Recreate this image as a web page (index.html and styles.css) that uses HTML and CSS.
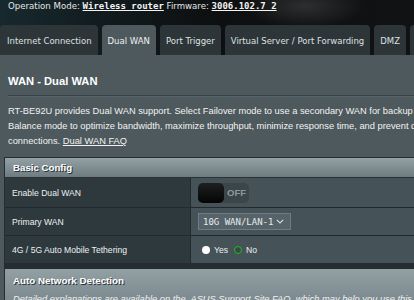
FILE: index.html
```html
<!DOCTYPE html>
<html>
<head>
<meta charset="utf-8">
<link rel="stylesheet" href="styles.css">
</head>
<body>
<div class="page">
  <header class="top">
    <div class="opbar">
      <span>Operation Mode:</span>
      <a class="mono">Wireless router</a>
      <span>Firmware:</span>
      <a class="mono">3006.102.7_2</a>
    </div>
    <nav class="tabs">
      <div class="tab">Internet Connection</div>
      <div class="tab active">Dual WAN</div>
      <div class="tab">Port Trigger</div>
      <div class="tab">Virtual Server / Port Forwarding</div>
      <div class="tab">DMZ</div>
      <div class="tab">DDNS</div>
    </nav>
  </header>
  <main class="content">
    <h1 class="title">WAN - Dual WAN</h1>
    <div class="divider"></div>
    <p class="desc">
      <span class="line">RT-BE92U provides Dual WAN support. Select Failover mode to use a secondary WAN for backup network access. Select Load</span>
      <span class="line">Balance mode to optimize bandwidth, maximize throughput, minimize response time, and prevent data overload for both WAN</span>
      <span class="line">connections. <a class="faq">Dual WAN FAQ</a></span>
    </p>

    <section class="formtable">
      <div class="thead">Basic Config</div>
      <div class="row r1">
        <div class="th">Enable Dual WAN</div>
        <div class="td">
          <div class="toggle"><span class="knob"></span><span class="off">OFF</span></div>
        </div>
      </div>
      <div class="row">
        <div class="th">Primary WAN</div>
        <div class="td">
          <div class="select"><span>10G WAN/LAN-1</span>
            <svg class="chev" width="8" height="5" viewBox="0 0 8 5"><polyline points="0.8,0.8 4,4 7.2,0.8" fill="none" stroke="#d8dcde" stroke-width="1.1"/></svg>
          </div>
        </div>
      </div>
      <div class="row">
        <div class="th">4G / 5G Auto Mobile Tethering</div>
        <div class="td radios">
          <label class="radio"><span class="dot yes"></span>Yes</label>
          <label class="radio"><span class="dot no"></span>No</label>
        </div>
      </div>
    </section>

    <section class="formtable second">
      <div class="thead big">
        <div>Auto Network Detection</div>
        <div class="note">Detailed explanations are available on the&nbsp; ASUS Support Site FAQ, which may help you use this function properly.</div>
      </div>
    </section>
  </main>
</div>
</body>
</html>
```
FILE: styles.css
```css
html, body {
  margin: 0;
  padding: 0;
}
body {
  width: 414px;
  height: 300px;
  overflow: hidden;
  background: #4d595d;
  font-family: "Liberation Sans", Arial, sans-serif;
  color: #fff;
}
.page {
  width: 760px;
}
.top {
  background:
    radial-gradient(ellipse 60px 22px at 305px 6px, rgba(70,72,72,0.55), rgba(70,72,72,0) 100%),
    linear-gradient(90deg, #17292e 0px, #111a1d 110px, #0d0f10 220px, #101213 414px);
}
.opbar {
  height: 25px;
  padding-left: 8px;
  font: 8.6px/12px "DejaVu Sans", sans-serif;
  color: #e4e6e6;
  white-space: nowrap;
}
.opbar .mono {
  font: bold 9px/12px "DejaVu Sans Mono", monospace;
  color: #f4f4f4;
  text-decoration: underline;
}
.tabs {
  display: flex;
  gap: 4px;
  height: 30px;
}
.tab {
  height: 27px;
  padding: 3px 6px 0;
  line-height: 27px;
  font: 8.5px/27px "DejaVu Sans", sans-serif;
  color: #dde1e2;
  background: #2d3538;
  border-radius: 4px 4px 0 0;
  white-space: nowrap;
}
.tab:first-child {
  padding-left: 7px;
}
.tab.active {
  background: #4d595d;
  color: #eef0f0;
}
.content {
  padding-top: 19px;
}
.title {
  margin: 0 0 0 8px;
  font-size: 11.2px;
  line-height: 14px;
  font-weight: bold;
  color: #fff;
}
.divider {
  margin: 7px 0 0 8px;
  height: 1px;
  background: #39434a;
  border-bottom: 1px solid #56646a;
}
.desc {
  margin: 7px 0 0 8px;
  font-size: 9.3px;
  line-height: 15px;
  color: #f2f2f2;
}
.desc .line {
  display: block;
  white-space: nowrap;
}
.faq {
  text-decoration: underline;
}
.formtable {
  margin: 8px 0 0 4px;
  border: 1px solid #252d31;
  border-bottom-width: 6px;
  width: 740px;
}
.thead {
  height: 19px;
  padding-left: 8px;
  font-size: 9.7px;
  line-height: 19px;
  font-weight: bold;
  color: #fff;
  text-shadow: 1px 1px 0 #2a3336;
  background: linear-gradient(#93a0a4, #6e7c81);
  border-bottom: 1px solid #2a3236;
}
.row {
  display: flex;
  height: 27px;
  border-bottom: 1px solid #222a2d;
}
.row.r1 {
  height: 29px;
}
.row:last-child {
  border-bottom: none;
}
.th {
  width: 186px;
  padding-left: 7px;
  box-sizing: border-box;
  display: flex;
  align-items: center;
  font-size: 8.6px;
  color: #eef0f1;
  background: #2d393d;
  border-right: 1px solid #222a2d;
}
.td {
  flex: 1;
  display: flex;
  align-items: center;
  padding-left: 7px;
  background: #455257;
}
.toggle {
  display: flex;
  align-items: center;
  width: 51px;
  height: 20px;
  border-radius: 5px;
  background: #3a4649;
}
.knob {
  width: 26px;
  height: 20px;
  border-radius: 5px;
  background: linear-gradient(#1d1f20, #050505);
}
.off {
  flex: 1;
  text-align: center;
  font-size: 9.5px;
  font-weight: bold;
  color: #8d999c;
}
.select {
  display: flex;
  align-items: center;
  justify-content: space-between;
  width: 93px;
  height: 17px;
  box-sizing: border-box;
  padding: 0 6px 0 4px;
  border: 1px solid #6f7c80;
  background: #56636a;
  font: 9px "DejaVu Sans Mono", monospace;
  color: #e8ebec;
}
.radios {
  gap: 6px;
  padding-left: 11px;
}
.radio {
  display: flex;
  align-items: center;
  gap: 4px;
  font-size: 8.6px;
  color: #eef0f1;
}
.dot {
  width: 8px;
  height: 8px;
  box-sizing: border-box;
  border-radius: 50%;
}
.dot.yes {
  background: #fff;
}
.dot.no {
  border: 1.6px solid #19c219;
  background: #3a464a;
}
.formtable.second {
  margin-top: 0;
  border-top: none;
  border-bottom: none;
}
.thead.big {
  height: 40px;
  padding-top: 6px;
  line-height: 11px;
  font-size: 9.8px;
  background: linear-gradient(#929fa3, #76848a 40px);
  border-bottom: none;
}
.note {
  margin-top: 8px;
  font-weight: normal;
  font-style: italic;
  font-size: 9.3px;
  text-shadow: none;
  color: #f0f0f0;
  white-space: nowrap;
}
```
